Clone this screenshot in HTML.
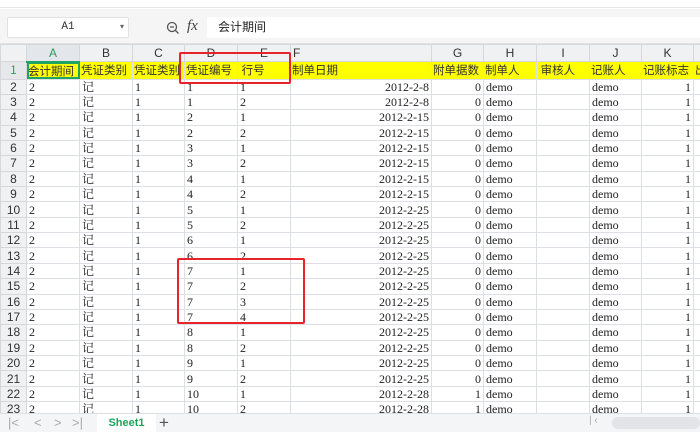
<!DOCTYPE html>
<html><head><meta charset="utf-8"><style>
*{margin:0;padding:0;box-sizing:border-box}
body{width:700px;height:438px;overflow:hidden;background:#fff;position:relative;font-family:"Liberation Serif","Noto Serif CJK SC",serif;font-size:12px;color:#222}
.top{position:absolute;left:0;top:0;width:700px;height:8px;background:#fff;border-bottom:1px solid #e6e6e6}
.fbar{position:absolute;left:0;top:9px;width:700px;height:35px;background:#f5f5f5;border-bottom:1px solid #e0e0e0}
.nb{position:absolute;left:7px;top:17px;width:122px;height:21px;background:#fff;border:1px solid #e2e2e2;border-radius:2px;font:11px "Liberation Mono",monospace;text-align:center;line-height:19px;color:#333}
.nb span{position:absolute;right:4px;top:0;font-size:8px;color:#666}
.fx{position:absolute;top:18px;font:italic 15px "Liberation Serif",serif;color:#444}
.fin{position:absolute;left:207px;top:17px;width:493px;height:21px;background:#fff;font:12px "Noto Sans CJK SC",sans-serif;line-height:20px;padding-left:11px;color:#222}
table{position:absolute;left:0;top:44px;border-collapse:collapse;table-layout:fixed;width:713px}
td{border:1px solid #dcdfe4;height:15.36px;padding:0 2px;white-space:nowrap;overflow:hidden;line-height:14px}
tr.h td{height:17px;background:#f0f1f3;text-align:center;font:12px "Liberation Sans",sans-serif;color:#333;border-color:#d5d7da}
td.rh{background:#f0f1f3;text-align:center;font:12px "Liberation Sans",sans-serif;color:#333;padding:0;border-color:#d5d7da}
tr.y td{background:#ffff00;font:11.5px "Noto Sans CJK SC",sans-serif;color:#333;padding:0 1px}
tr.y td.rh{background:#e5e7ea;color:#2a9d5c}
tr.h td.sel{background:#e3e6ea;color:#2a9d5c;border-bottom:2px solid #21a366}
.r{text-align:right}
.red{position:absolute;border:2px solid #e8242a;border-radius:2px}
.tabs{position:absolute;left:0;top:413px;width:700px;height:19px;background:#f4f5f6;border-top:1px solid #dcdfe4;font:13px "Liberation Sans",sans-serif;color:#aaa}
.sheet{position:absolute;left:97px;top:0;width:59px;height:19px;background:#fff;color:#1fa35a;font-weight:bold;font-size:11px;text-align:center;line-height:19px}
.bot{position:absolute;left:0;top:432px;width:700px;height:6px;background:#fff}
.sb{position:absolute;left:612px;top:3px;width:88px;height:12px;background:#e2e4e7;border-radius:6px}
</style></head><body>
<div class="top"></div>
<div class="fbar"></div>
<div class="nb">A1<span>▾</span></div>
<svg style="position:absolute;left:166px;top:21px" width="14" height="14" viewBox="0 0 14 14"><circle cx="6" cy="6" r="4.5" fill="none" stroke="#555" stroke-width="1.3"/><path d="M4 6h4M9.5 9.5l3 3" stroke="#555" stroke-width="1.3"/></svg>
<div class="fx" style="left:187px">fx</div>
<div class="fin">会计期间</div>
<table>
<colgroup><col style="width:26px"><col style="width:53px"><col style="width:53px"><col style="width:52px"><col style="width:53px"><col style="width:53px"><col style="width:141px"><col style="width:52px"><col style="width:53px"><col style="width:53px"><col style="width:52px"><col style="width:52px"><col style="width:20px"></colgroup>
<tr class="h"><td></td><td class="sel">A</td><td>B</td><td>C</td><td>D</td><td>E</td><td style="text-align:left">F</td><td>G</td><td>H</td><td>I</td><td>J</td><td>K</td><td></td></tr>
<tr class="y"><td class="rh">1</td><td style="outline:2px solid #21a366;outline-offset:-2px">会计期间</td><td>凭证类别</td><td>凭证类别</td><td>凭证编号</td><td>&nbsp;行号</td><td>制单日期</td><td>附单据数</td><td>制单人</td><td>&nbsp;审核人</td><td>记账人</td><td>记账标志</td><td>出</td></tr>
<tr><td class="rh">2</td><td>2</td><td>记</td><td>1</td><td>1</td><td>1</td><td class="r">2012-2-8</td><td class="r">0</td><td>demo</td><td></td><td>demo</td><td class="r">1</td><td></td></tr>
<tr><td class="rh">3</td><td>2</td><td>记</td><td>1</td><td>1</td><td>2</td><td class="r">2012-2-8</td><td class="r">0</td><td>demo</td><td></td><td>demo</td><td class="r">1</td><td></td></tr>
<tr><td class="rh">4</td><td>2</td><td>记</td><td>1</td><td>2</td><td>1</td><td class="r">2012-2-15</td><td class="r">0</td><td>demo</td><td></td><td>demo</td><td class="r">1</td><td></td></tr>
<tr><td class="rh">5</td><td>2</td><td>记</td><td>1</td><td>2</td><td>2</td><td class="r">2012-2-15</td><td class="r">0</td><td>demo</td><td></td><td>demo</td><td class="r">1</td><td></td></tr>
<tr><td class="rh">6</td><td>2</td><td>记</td><td>1</td><td>3</td><td>1</td><td class="r">2012-2-15</td><td class="r">0</td><td>demo</td><td></td><td>demo</td><td class="r">1</td><td></td></tr>
<tr><td class="rh">7</td><td>2</td><td>记</td><td>1</td><td>3</td><td>2</td><td class="r">2012-2-15</td><td class="r">0</td><td>demo</td><td></td><td>demo</td><td class="r">1</td><td></td></tr>
<tr><td class="rh">8</td><td>2</td><td>记</td><td>1</td><td>4</td><td>1</td><td class="r">2012-2-15</td><td class="r">0</td><td>demo</td><td></td><td>demo</td><td class="r">1</td><td></td></tr>
<tr><td class="rh">9</td><td>2</td><td>记</td><td>1</td><td>4</td><td>2</td><td class="r">2012-2-15</td><td class="r">0</td><td>demo</td><td></td><td>demo</td><td class="r">1</td><td></td></tr>
<tr><td class="rh">10</td><td>2</td><td>记</td><td>1</td><td>5</td><td>1</td><td class="r">2012-2-25</td><td class="r">0</td><td>demo</td><td></td><td>demo</td><td class="r">1</td><td></td></tr>
<tr><td class="rh">11</td><td>2</td><td>记</td><td>1</td><td>5</td><td>2</td><td class="r">2012-2-25</td><td class="r">0</td><td>demo</td><td></td><td>demo</td><td class="r">1</td><td></td></tr>
<tr><td class="rh">12</td><td>2</td><td>记</td><td>1</td><td>6</td><td>1</td><td class="r">2012-2-25</td><td class="r">0</td><td>demo</td><td></td><td>demo</td><td class="r">1</td><td></td></tr>
<tr><td class="rh">13</td><td>2</td><td>记</td><td>1</td><td>6</td><td>2</td><td class="r">2012-2-25</td><td class="r">0</td><td>demo</td><td></td><td>demo</td><td class="r">1</td><td></td></tr>
<tr><td class="rh">14</td><td>2</td><td>记</td><td>1</td><td>7</td><td>1</td><td class="r">2012-2-25</td><td class="r">0</td><td>demo</td><td></td><td>demo</td><td class="r">1</td><td></td></tr>
<tr><td class="rh">15</td><td>2</td><td>记</td><td>1</td><td>7</td><td>2</td><td class="r">2012-2-25</td><td class="r">0</td><td>demo</td><td></td><td>demo</td><td class="r">1</td><td></td></tr>
<tr><td class="rh">16</td><td>2</td><td>记</td><td>1</td><td>7</td><td>3</td><td class="r">2012-2-25</td><td class="r">0</td><td>demo</td><td></td><td>demo</td><td class="r">1</td><td></td></tr>
<tr><td class="rh">17</td><td>2</td><td>记</td><td>1</td><td>7</td><td>4</td><td class="r">2012-2-25</td><td class="r">0</td><td>demo</td><td></td><td>demo</td><td class="r">1</td><td></td></tr>
<tr><td class="rh">18</td><td>2</td><td>记</td><td>1</td><td>8</td><td>1</td><td class="r">2012-2-25</td><td class="r">0</td><td>demo</td><td></td><td>demo</td><td class="r">1</td><td></td></tr>
<tr><td class="rh">19</td><td>2</td><td>记</td><td>1</td><td>8</td><td>2</td><td class="r">2012-2-25</td><td class="r">0</td><td>demo</td><td></td><td>demo</td><td class="r">1</td><td></td></tr>
<tr><td class="rh">20</td><td>2</td><td>记</td><td>1</td><td>9</td><td>1</td><td class="r">2012-2-25</td><td class="r">0</td><td>demo</td><td></td><td>demo</td><td class="r">1</td><td></td></tr>
<tr><td class="rh">21</td><td>2</td><td>记</td><td>1</td><td>9</td><td>2</td><td class="r">2012-2-25</td><td class="r">0</td><td>demo</td><td></td><td>demo</td><td class="r">1</td><td></td></tr>
<tr><td class="rh">22</td><td>2</td><td>记</td><td>1</td><td>10</td><td>1</td><td class="r">2012-2-28</td><td class="r">1</td><td>demo</td><td></td><td>demo</td><td class="r">1</td><td></td></tr>
<tr><td class="rh">23</td><td>2</td><td>记</td><td>1</td><td>10</td><td>2</td><td class="r">2012-2-28</td><td class="r">1</td><td>demo</td><td></td><td>demo</td><td class="r">1</td><td></td></tr>
</table>
<div class="red" style="left:179px;top:52px;width:112px;height:32px"></div>
<div class="red" style="left:177px;top:258px;width:128px;height:66px"></div>
<div class="tabs">
<span style="position:absolute;left:8px;top:1px">|&lt;</span>
<span style="position:absolute;left:34px;top:1px">&lt;</span>
<span style="position:absolute;left:54px;top:1px">&gt;</span>
<span style="position:absolute;left:72px;top:1px">&gt;|</span>
<div class="sheet">Sheet1</div>
<span style="position:absolute;left:159px;top:-1px;font-size:17px;color:#555">+</span>
<span style="position:absolute;left:589px;top:1px;font-size:10px">| ‹</span>
<div class="sb"></div>
</div>
<div class="bot"></div>
</body></html>
